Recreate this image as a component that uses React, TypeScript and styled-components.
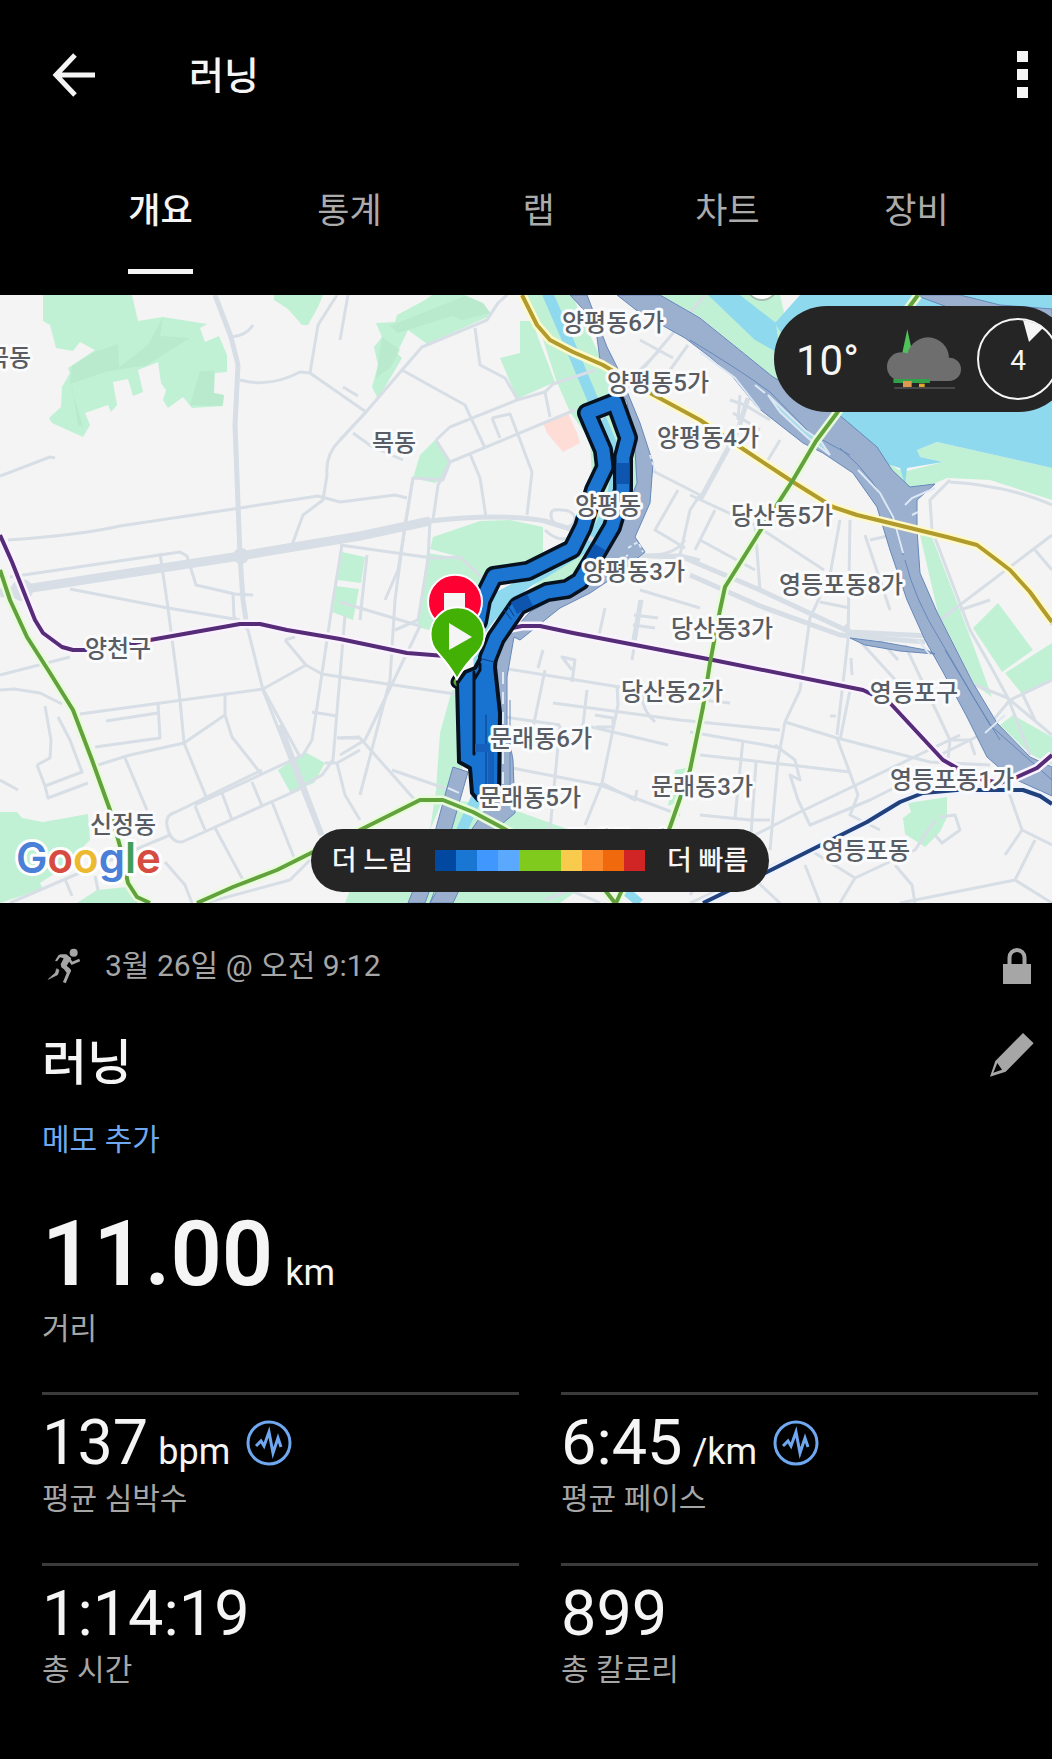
import React, { FC } from 'react'
import styled, { createGlobalStyle } from 'styled-components'

const Colors = {
    Black: '#000000',
    White: '#F5F5F5',
    Muted: '#A6A6A6',
    Link: '#6FA8F0',
    Line: '#3B3B3B',
    Panel: '#252525',
    Land: '#F4F4F4',
    Road: '#D7DEE5',
    Park: '#C1F1D4',
    ParkShade: '#B5E6C9',
    Water: '#8FD9EF',
    Highway: '#9BB0CF',
    HighwayEdge: '#6688BA',
}

type StatData = {
    value: string
    unit?: string
    label: string
    chart?: boolean
}
type MapLabel = {
    text: string
    x: number
    y: number
}

const tabs = ['개요', '통계', '랩', '차트', '장비']

const stats: StatData[] = [
    { value: '137', unit: 'bpm', label: '평균 심박수', chart: true },
    { value: '6:45', unit: '/km', label: '평균 페이스', chart: true },
    { value: '1:14:19', label: '총 시간' },
    { value: '899', label: '총 칼로리' },
]

const paceScale = ['#0048A0', '#1976D2', '#4098FF', '#5AA9FF', '#80CA1E', '#80CA1E', '#F9CB4D', '#FB8B2D', '#F0690C', '#D12424']

const labels: MapLabel[] = [
    { text: '곡동', x: 9, y: 366 },
    { text: '목동', x: 394, y: 451 },
    { text: '양평동6가', x: 613, y: 331 },
    { text: '양평동5가', x: 658, y: 391 },
    { text: '양평동4가', x: 708, y: 446 },
    { text: '양평동', x: 608, y: 514 },
    { text: '양평동3가', x: 634, y: 580 },
    { text: '당산동5가', x: 782, y: 524 },
    { text: '영등포동8가', x: 841, y: 593 },
    { text: '양천구', x: 118, y: 657 },
    { text: '당산동3가', x: 722, y: 637 },
    { text: '당산동2가', x: 672, y: 700 },
    { text: '영등포구', x: 914, y: 701 },
    { text: '문래동6가', x: 541, y: 747 },
    { text: '문래동5가', x: 530, y: 806 },
    { text: '문래동3가', x: 702, y: 795 },
    { text: '문래동4가', x: 617, y: 849 },
    { text: '영등포동1가', x: 952, y: 788 },
    { text: '영등포동', x: 866, y: 859 },
    { text: '신정동', x: 123, y: 833 },
]

const parks = [
    '43,295 43,321 50,325 56,348 73,351 80,342 95,350 68,368 70,373 62,387 61,407 49,418 52,423 83,437 90,425 85,413 108,405 111,412 117,405 113,382 128,379 133,396 143,392 138,370 158,362 161,383 166,390 163,400 168,408 183,397 192,408 223,406 224,395 214,393 215,373 227,372 227,355 219,336 205,342 200,328 207,324 163,317 138,321 132,295',
    '274,295 323,295 318,307 308,325 302,325 288,309 274,300',
    '376,323 395,322 397,315 425,300 432,295 465,295 483,303 492,315 427,344 408,330 397,353 402,358 378,399 372,387 378,365 374,347 382,337',
    '520,321 532,321 555,382 517,399 500,358 520,353',
    '527,295 572,295 606,370 640,440 640,490 610,550 560,600 520,600 560,560 592,480 590,440 570,412 556,380 540,330',
    '433,537 480,521 510,520 543,527 543,558 487,572 477,585 460,557 430,549',
    '427,553 460,558 482,580 470,640 417,627',
    '435,440 450,462 443,478 435,483 413,478 420,455',
    '342,552 365,557 361,583 337,580',
    '336,586 359,589 353,620 332,612',
    '660,295 780,295 800,380 867,453 837,413 773,377 700,317',
    '830,405 845,410 860,432 867,453 840,420',
    '875,445 887,463 903,472 943,462 920,457 917,450 937,442 1052,468 1052,500 990,480 947,478 920,490 895,487',
    '920,535 932,537 960,610 975,650 992,697 975,685 938,613',
    '973,628 998,603 1033,650 1002,672',
    '1005,673 1052,643 1052,680 1023,695',
    '1000,725 1013,715 1052,737 1052,765 1030,754',
    '908,803 947,797 947,817 940,832 925,847 905,834 903,818 911,812',
    '0,812 17,812 22,818 43,822 88,814 90,840 60,870 40,883 43,889 12,899 0,903',
    '77,903 97,890 127,887 138,903',
    '278,770 305,752 325,763 314,783 290,792',
    '452,690 462,690 462,770 447,790 430,830 436,790 440,733',
    '450,800 500,805 570,830 620,840 620,860 560,903 345,903 350,890 440,850',
    '675,770 686,768 683,800 668,806',
]

const shades = [
    '95,352 118,344 119,368 160,342 188,338 140,366 105,372 70,384 72,366',
    '163,317 148,345 118,368 145,366 190,338 160,336',
    '200,371 214,371 214,393 224,395 222,406 190,405',
    '70,373 78,425 83,427 72,390',
    '465,296 483,303 490,313 462,320 452,316 398,333 390,326',
    '382,337 400,350 390,368 376,378',
]

const highways = [
    '617,295 660,295 700,318 773,377 837,413 877,447 892,470 910,487 935,484 917,500 917,530 920,573 937,612 973,683 997,723 1030,757 1052,767 1052,796 1010,777 987,757 967,717 943,672 925,640 907,600 890,550 877,507 853,473 823,453 803,443 757,407 733,377 710,357 685,338 640,313',
    '570,295 587,295 607,347 617,367 640,423 653,463 650,503 635,537 645,552 620,573 590,593 560,608 520,640 514,637 507,677 507,727 513,760 515,813 483,840 453,903 430,903 470,832 492,800 490,700 495,650 530,612 590,578 622,520 637,483 635,450 627,402 600,360 595,322',
    '453,767 468,772 460,800 450,835 425,903 408,903 432,843 445,795',
    '850,638 882,642 926,650 935,654 900,651 865,645',
    '915,295 960,295 1000,305 1052,309 1052,325 1000,318 950,308',
]

const wideRoads = [
    'M0 592 L32 588 L240 556 L360 536 L430 521 Q500 513 545 521 L580 532 Q620 560 680 556 L760 590 L850 632 L930 636',
    'M215 295 L231 337 L238 365 L235 425 L240 556 L243 600 L246 620',
    'M690 575 L760 606 L840 635 L925 642',
    'M700 500 L738 430 L748 398',
    'M280 725 L322 835',
]

const roads = [
    'M215 295 L231 337 Q246 336 253 325',
    'M240 380 Q270 388 300 372 L310 373 L318 325 L337 295',
    'M310 373 L366 412 L340 440 Q325 455 327 475 L323 500 L303 515 L292 545',
    'M343 387 L358 396 M353 433 L371 446 L403 460',
    'M0 476 L50 457 L55 458',
    'M8 540 Q80 535 120 526 L240 508 L318 496 L340 502 L395 495 L407 498',
    'M10 577 L180 552 L187 556 L196 585 L235 594 L253 595',
    'M160 553 L168 608 L180 700 L184 743 L207 799',
    'M70 589 L168 608 L240 620',
    'M233 594 L234 617 L248 630 L263 690 L320 835',
    'M340 340 L348 295',
    'M340 440 L366 412 L402 370 L422 347 L487 320 L498 303 L507 295',
    'M402 370 L465 405 L485 448 M475 328 L480 365 L505 378 L518 400',
    'M436 440 L450 427 L517 400 L545 392 L553 384 L595 370',
    'M450 462 L575 410 M545 392 L550 417',
    'M492 418 L510 414 L520 440 L532 472 L527 515 M492 418 L500 438',
    'M470 454 L480 478 L486 517 M450 462 L438 485 L433 520',
    'M436 440 L450 462 L443 480 L413 478 L398 570 L385 600',
    'M413 478 L405 525 L395 600 L390 680 L360 795',
    'M430 521 L428 560 L418 620 L395 630',
    'M340 545 L432 558 L460 557 L490 585 M367 555 L362 600 L360 620',
    'M340 602 L420 626 M342 545 L333 600 L312 740 L303 755 L260 775 L195 805',
    'M345 615 L333 760 L322 775 L290 793',
    'M80 714 L263 689 L306 665 M263 689 L300 757',
    'M95 747 L160 738 L158 703 M106 721 L158 713 M0 690 L14 689 L40 693 L62 704 M0 675 L70 657',
    'M37 765 L50 758 L51 740 L45 706 M58 717 L70 740 L82 772 L45 786 L37 765 M45 786 L48 798 L88 783',
    'M98 765 L130 755 L184 743 L225 715 L225 693 M225 715 L232 737 L262 775',
    'M125 758 L147 810 M0 780 L18 790',
    'M167 825 Q165 815 176 812 L262 770 M167 825 Q170 843 182 842 L300 789',
    'M195 806 L205 830 M222 793 L232 820 M252 782 L262 806 M215 828 L243 880 M272 802 L295 860',
    'M10 903 L70 877 L170 835 M65 879 L72 896 M95 876 L98 890 M165 862 L185 885 L192 903',
    'M325 763 L337 763 L345 795 L360 820 M337 763 L360 750',
    'M285 640 L306 665 L322 674 L360 680 M285 640 L295 637 M312 712 L337 716 M337 738 L360 737',
    'M340 677 L455 694 M420 626 L365 740 L340 755 M340 738 L360 738 L415 800 M392 770 L450 790',
    'M705 295 L600 420 M640 340 L673 358 M660 350 L630 380 M688 345 L670 370',
    'M653 471 L700 495 L690 510 L680 555 M678 490 L655 530 L685 548 M650 555 Q675 555 685 540',
    'M640 590 L700 608 M642 600 L632 660 M700 560 L680 555',
    'M502 668 L700 700 L730 703 M505 717 L560 725 M553 703 L680 720 L780 730',
    'M512 768 L600 785 L680 815 M560 725 L550 830 M545 670 L530 742',
    'M587 690 L583 725 L668 745 M595 715 L613 718 L613 727 L596 727 M572 670 L562 657 L575 660 L572 682',
    'M617 685 L618 705 L602 783 L585 825 M602 783 L635 800 L637 790 M642 695 Q642 710 655 722',
    'M640 600 L633 640 M633 625 L655 628 M634 615 L658 618 M605 608 L598 640 M543 650 L538 668',
    'M690 495 L755 525 L824 570 M700 540 L755 570 M715 510 L695 550',
    'M755 525 L760 590 M733 413 L760 430 M780 440 L768 460 M840 520 L830 575 L810 618 L800 690 L785 722',
    'M850 520 L848 640 L837 735 M865 535 L890 610 M870 540 L888 536 M820 602 L850 608 M845 625 L900 685',
    'M785 722 L837 738 L930 762 L990 765 M785 722 L778 760 L770 850',
    'M690 732 L765 745 L780 748 M700 755 L790 765 L850 772 M743 740 L735 818 M756 762 L750 850',
    'M775 745 L795 760 L800 780 L790 775 L798 800 L810 825 L870 800 L930 770',
    'M837 738 L858 795 L850 815 L880 830 M700 815 L750 820 L770 820',
    'M690 868 L800 812 L960 735 M940 755 L980 735 L985 730',
    'M840 740 L850 690 M851 658 L852 675 M830 716 L836 716',
    'M905 645 L950 740 L948 760 M880 640 L898 660 M948 740 L970 740 L975 755',
    'M690 903 L850 830 L905 800 M750 875 L780 903 M805 865 L820 903',
    'M810 850 L855 878 L915 850 L935 820 M855 878 L840 903 M895 865 L912 885 L915 903',
    'M940 817 L955 815 L960 830 L942 843 L935 835',
    'M950 480 L930 500 L932 530 L970 630 L990 665 L1008 698 L1030 755 M950 482 Q1010 486 1052 505',
    'M940 620 L1052 535 M1010 570 L1052 625 M1035 550 L1052 570 M960 610 L990 600',
    'M985 730 L1010 700 L1052 680 M975 685 L1008 698 M1010 700 L1052 735 M1023 695 L1035 720',
    'M1008 790 L1022 830 L1005 855 M1022 830 L1052 845 M1035 840 L1015 880 L1052 903 M1015 880 L900 903',
    'M700 880 L690 895 M205 903 L290 880 L310 860 M545 900 L570 890 L600 903',
    'M730 400 L745 405 L770 420 M740 395 L738 420',
    'M553 510 Q575 508 575 520 Q570 532 555 525 Q548 515 553 510 M545 530 Q560 545 575 535',
]

const toRailPath = (points: string) => `M${points.split(' ').join(' L')}`

const rails = [
    { color: '#B09B2C', halo: '#FFF9C8', points: '522,295 537,325 550,340 573,352 603,365 650,393 700,420 740,447 793,482 833,507 857,515 947,537 977,545 993,557 1010,570 1030,592 1043,610 1052,622' },
    { color: '#562C78', halo: '#FAF2FF', points: '0,535 12,562 27,600 35,620 43,633 62,647 73,650 87,650 120,646 150,640 240,624 260,624 287,630 340,639 407,653 445,656' },
    { color: '#562C78', halo: '#FAF2FF', points: '503,630 522,626 540,626 573,633 713,660 863,690 890,703 903,717 943,760 957,768 975,778 1000,783 1017,777 1037,768 1052,755' },
    { color: '#61A23C', halo: '#E8FBDA', points: '0,570 10,600 27,637 50,673 73,710 92,760 110,810 121,850 128,883 137,897 150,903' },
    { color: '#61A23C', halo: '#E8FBDA', points: '197,903 233,887 277,870 313,852 360,830 420,800 443,800 473,812 503,828 560,860 605,890 615,903' },
    { color: '#61A23C', halo: '#E8FBDA', points: '918,295 907,310 837,413 816,441 793,480 762,528 725,587 720,610 710,663 703,707 690,770 670,827 650,862 622,890 616,903' },
    { color: '#20417C', halo: '#EEF3FF', points: '703,903 767,872 867,822 900,802 923,793 957,790 1023,790 1040,796 1052,804' },
]

const streamPath = 'M546 290 L572 350 L592 398 L612 445 L617 470 L610 510 L588 545 L540 575 L487 603 L477 625 L480 680 L480 790 L462 830 L440 903'
const trackPath = 'M478 622 L482 600 L494 576 L528 571 L572 549 L583 527 L594 490 L605 467 L603 450 L587 413 L615 402 L628 438 L623 457 L623 490 L612 527 L595 556 L580 581 L567 589 L547 592 L518 606 L496 638 L488 658'
const trackBlock = '457,683 459,762 470,768 472,793 478,800 499,795 500,713 495,667 496,655 482,655 475,668 465,672'

const BackIcon: FC = () => (
    <svg width="44" height="44" viewBox="0 0 44 44" fill="none" stroke={Colors.White} strokeWidth="5">
        <path d="M43 22H5M23 2L4 22l19 20" />
    </svg>
)

const DotsIcon: FC = () => (
    <svg width="11" height="48" viewBox="0 0 11 48" fill={Colors.White}>
        <path d="M0 0h11v11H0zM0 18h11v11H0zM0 36h11v11H0z" />
    </svg>
)

const RunIcon: FC = () => (
    <svg width="34" height="36" viewBox="0 0 100 108" fill="none" stroke={Colors.Muted}>
        <circle cx="79" cy="14" r="12" fill={Colors.Muted} stroke="none" />
        <path d="M41 19L57 19L72 31L58 53L69 63L70 72L62 80L50 64L42 58L40 49L49 31L38 28L29 40L23 38L34 21Z" fill={Colors.Muted} stroke="none" />
        <path d="M63 31L74 46L97 36" strokeWidth="8" />
        <path d="M47 53L66 68L61 80L51 104" strokeWidth="9" />
        <path d="M35 66L31 80L3 94L10 87L24 75L28 62Z" fill={Colors.Muted} strokeWidth="2" />
    </svg>
)

const LockIcon: FC = () => (
    <svg width="28" height="36" viewBox="0 0 28 36">
        <path d="M6.500 18V9.500a7.500 7.500 0 0 1 15 0V18" fill="none" stroke={Colors.Muted} strokeWidth="4" />
        <path d="M0 16h28v20H0z" fill={Colors.Muted} />
    </svg>
)

const PencilIcon: FC = () => (
    <svg width="44" height="44" viewBox="0 0 132 132" fill={Colors.Muted}>
        <path d="M99 0L131 31L47 116L0 131L16 84ZM22 90L10 119L36 110Z" fillRule="evenodd" />
    </svg>
)

const PulseIcon: FC = () => (
    <svg width="46" height="46" viewBox="0 0 46 46" fill="none" stroke={Colors.Link}>
        <circle cx="23" cy="23" r="21" strokeWidth="3" />
        <path d="M10 26L15 21L18 26L23 12L27 33L32 18L35 27" strokeWidth="3" />
    </svg>
)

const CloudIcon: FC = () => (
    <svg width="74" height="62" viewBox="0 0 222 186">
        <path d="M61 4L78 84H44Z" fill="#4FC35A" />
        <path d="M20 148H128V165H20Z" fill="#32A24A" />
        <g fill="#6E6E6E">
            <circle cx="43" cy="116" r="43" />
            <circle cx="123" cy="91" r="63" />
            <circle cx="187" cy="124" r="35" />
            <path d="M43 100H187V159H43Z" />
        </g>
        <path d="M20 153H128V165H20Z" fill="#32A24A" />
        <path d="M48 159H74V177H48Z" fill="#DD994D" />
        <path d="M96 167H113V177H96Z" fill="#E0A52F" />
        <path d="M22 180H204" stroke="#555" strokeWidth="5" />
    </svg>
)

const WindArrow: FC = () => (
    <svg width="21" height="22" viewBox="0 0 21 22">
        <path d="M0 0Q12 2 20 8L6 22Z" fill={Colors.White} />
    </svg>
)

const MapCanvas: FC<{ className?: string }> = ({ className }) => (
    <svg className={className} viewBox="0 295 1052 608" preserveAspectRatio="xMidYMid slice" role="img" aria-label="지도">
        <rect x="0" y="295" width="1052" height="608" fill={Colors.Land} />
        <g fill={Colors.Park}>{ parks.map((points) => <polygon key={points} points={points} />) }</g>
        <g fill={Colors.ParkShade} opacity="0.6">{ shades.map((points) => <polygon key={points} points={points} />) }</g>
        <polygon points="543,423 568,413 577,433 580,443 563,452 547,433" fill="#FFDDD7" />

        {/* Han river and the stream that runs into it */}
        <g fill={Colors.Water}>
            <polygon points="708,295 740,295 776,323 780,354 755,340" />
            <polygon points="800,295 1052,295 1052,468 937,442 917,450 920,457 943,462 907,468 905,485 900,468 880,462 865,450 855,430 800,375 785,340 775,323" />
            <polygon points="490,603 515,582 545,575 520,595 495,620 480,640 472,630" />
        </g>
        <path d={streamPath} fill="none" stroke={Colors.Water} strokeWidth="11" />
        <path d="M500 830L530 840L600 870L640 903" fill="none" stroke={Colors.Water} strokeWidth="9" />

        <g fill="none" stroke={Colors.Road} strokeLinejoin="round">
            <g strokeWidth="3">{ roads.map((d) => <path key={d} d={d} />) }</g>
            <g strokeWidth="5">{ wideRoads.map((d) => <path key={d} d={d} />) }</g>
            <path d="M0 593L32 588L240 556L360 536L430 521" strokeWidth="9" />
        </g>
        <circle cx="241" cy="556" r="8" fill={Colors.Road} />
        <circle cx="22" cy="590" r="11" fill={Colors.Road} />

        <g fill={Colors.Highway} stroke={Colors.HighwayEdge}>{ highways.map((points) => <polygon key={points} points={points} />) }</g>
        <g fill="none" stroke={Colors.HighwayEdge}>
            <path d="M690 340Q740 370 770 392L810 433L850 455" />
            <path d="M840 448Q878 480 893 520L903 555" />
            <path d="M905 560Q915 600 940 640L990 725L1052 780M945 650L975 700L1000 740" />
            <path d="M450 850L430 903M510 700V800" />
        </g>
        <g fill="none" stroke="#DDE8F5" strokeWidth="2">
            <path d="M768 395L805 430L820 440L830 455L808 438L780 412Z" fill="#A8DCE8" />
            <path d="M858 470L880 493L893 517L903 553" />
            <path d="M905 505L912 498L935 488M912 515L918 512M700 352L735 378L760 410M755 385L765 393" />
            <path d="M650 455L655 470M628 548L638 542L643 552M620 560L628 555" strokeDasharray="4 3" />
            <path d="M448 788L466 796M503 672V800" strokeDasharray="12 8" />
            <path d="M985 733L1005 715M918 640L930 655" />
        </g>

        <g fill="none" strokeLinejoin="round">
            { rails.map(({ halo, points }) => <path key={points} d={toRailPath(points)} stroke={halo} strokeWidth="9" />) }
            { rails.map(({ color, points }) => <path key={points} d={toRailPath(points)} stroke={color} strokeWidth="4" />) }
        </g>

        {/* recorded track */}
        <g fill="none" strokeLinejoin="round" strokeLinecap="round">
            <path d={trackPath} stroke="#06121F" strokeWidth="20" />
            <polygon points={trackBlock} fill="#1873D0" stroke="#06121F" strokeWidth="4" />
            <path d={trackPath} stroke="#1B75D1" strokeWidth="13" />
            <path d="M623 463V484M530 600L514 608M600 547L593 559" stroke="#0D55AE" strokeWidth="13" strokeLinecap="butt" />
            <path d="M474 672V754M474 680L480 670V664" stroke="#06121F" strokeWidth="3" />
            <path d="M486 715V795M508 606L514 616M504 610L511 619M482 659L494 662" stroke="#0B3F86" />
            <path d="M475 744H494V793H488V752H475Z" fill="#1460BC" stroke="none" />
            <path d="M455 676Q448 684 457 688" fill="#68A52E" stroke="#06121F" strokeWidth="3" />
        </g>

        <g fill={Colors.White} stroke="#FFFFFF" strokeWidth="2">
            <path d="M455 644L435 620A27 27 0 1 1 475 620Z" fill="#FF0033" />
            <path d="M444 593H465V614H444Z" stroke="none" />
            <path d="M457 679Q449 665 438 653A27 27 0 1 1 477 653Q465 665 457 679Z" fill="#43B005" />
            <path d="M449 623L472 637L449 650Z" stroke="none" />
        </g>

        <g>{ labels.map(({ text, x, y }) => <PlaceName key={text} x={x} y={y}>{text}</PlaceName>) }</g>
        <circle cx="762" cy="285" r="16" fill="#8C8C8C" opacity="0.5" />
        <circle cx="762" cy="284" r="15" fill="#FFFFFF" />

        <LogoText x="16" y="873">
            <tspan fill="#4A80D8">G</tspan>
            <tspan fill="#D64C40">o</tspan>
            <tspan fill="#EDB92E">o</tspan>
            <tspan fill="#4A80D8">g</tspan>
            <tspan fill="#3FA05A">l</tspan>
            <tspan fill="#D64C40">e</tspan>
        </LogoText>
    </svg>
)

const Stat: FC<{ data: StatData }> = ({ data }) => (
    <StatBox>
        <StatValue>
            <dd>{data.value}</dd>
            { data.unit && <Unit>{data.unit}</Unit> }
            { data.chart && <PulseButton type="button" aria-label={`${data.label} 차트`}><PulseIcon /></PulseButton> }
        </StatValue>
        <StatLabel>{data.label}</StatLabel>
    </StatBox>
)

const App: FC = () => (
    <Page>
        <GlobalStyle />
        <Header>
            <IconButton type="button" aria-label="뒤로"><BackIcon /></IconButton>
            <HeaderTitle>러닝</HeaderTitle>
            <IconButton type="button" aria-label="더보기"><DotsIcon /></IconButton>
        </Header>
        <TabBar role="tablist">
            { tabs.map((name, index) =>
                <Tab key={name} type="button" role="tab" aria-selected={index === 0} $selected={index === 0}>
                    <span>{name}</span>
                </Tab>
            )}
        </TabBar>
        <MapPanel>
            <StyledMapCanvas />
            <Weather>
                <Temperature>10°</Temperature>
                <CloudIcon />
                <Wind><WindArrow />4</Wind>
            </Weather>
            <LegendRow>
                <Legend>
                    <span>더 느림</span>
                    <Scale>{ paceScale.map((color, index) => <Swatch key={index} $color={color} />) }</Scale>
                    <span>더 빠름</span>
                </Legend>
            </LegendRow>
        </MapPanel>
        <Details>
            <MetaRow>
                <RunIcon />
                <time>3월 26일 @ 오전 9:12</time>
                <LockIcon />
            </MetaRow>
            <TitleRow>
                <h2>러닝</h2>
                <IconButton type="button" aria-label="이름 편집"><PencilIcon /></IconButton>
            </TitleRow>
            <NoteLink href="#note">메모 추가</NoteLink>
            <Distance>
                <DistanceValue><dd>11.00</dd><Unit>km</Unit></DistanceValue>
                <StatLabel>거리</StatLabel>
            </Distance>
            <StatGrid>{ stats.map((data) => <Stat key={data.label} data={data} />) }</StatGrid>
        </Details>
    </Page>
)

const GlobalStyle = createGlobalStyle`
    body {
        margin: 0;
        background: ${Colors.Black};
    }
    * {
        box-sizing: border-box;
    }
    button {
        padding: 0;
        border: 0;
        background: none;
        color: inherit;
        font: inherit;
        cursor: pointer;
    }
    svg {
        display: block;
        flex-shrink: 0;
    }
    h1, h2, dl, dd {
        margin: 0;
    }
`

const Page = styled.main`
    min-height: 100vh;
    background: ${Colors.Black};
    color: ${Colors.White};
    font-family: Roboto, 'Noto Sans CJK KR', sans-serif;
    font-size: 30px;
    line-height: 40px;
`

const Header = styled.header`
    display: flex;
    align-items: center;
    height: 150px;
    padding: 0 24px 0 52px;
`

const IconButton = styled.button`
    display: flex;
`

const HeaderTitle = styled.h1`
    flex: 1;
    padding: 2px 0 0 93px;
    font-size: 38px;
    font-weight: 500;
`

const TabBar = styled.div`
    display: grid;
    grid-template-columns: repeat(5, 1fr);
    padding: 0 41px 21px 66px;
`

const Tab = styled.button<{ $selected: boolean }>`
    color: ${props => props.$selected ? Colors.White : '#ABABAB'};
    font-size: 35px;
    font-weight: ${props => props.$selected ? 500 : 400};
    line-height: 124px;

    span {
        display: inline-block;
        box-shadow: ${props => props.$selected ? `inset 0 -5px ${Colors.White}` : 'none'};
    }
`

const MapPanel = styled.section`
    position: relative;
    overflow: hidden;
    height: 608px;
`

const StyledMapCanvas = styled(MapCanvas)`
    width: 100%;
    height: 100%;
`

const PlaceName = styled.text`
    fill: #595D63;
    stroke: #FAFBFC;
    stroke-width: 6px;
    stroke-linejoin: round;
    paint-order: stroke;
    text-anchor: middle;
    font-size: 24px;
    font-weight: 500;
`

const LogoText = styled.text`
    stroke: #FFFFFF;
    stroke-width: 6px;
    stroke-linejoin: round;
    paint-order: stroke;
    font-family: Inter, sans-serif;
    font-size: 42px;
    font-weight: 600;
`

const Weather = styled.div`
    position: absolute;
    top: 11px;
    right: -20px;
    display: flex;
    align-items: center;
    gap: 16px;
    width: 298px;
    height: 106px;
    padding: 0 13px 0 22px;
    border-radius: 53px;
    background: ${Colors.Panel};
`

const Temperature = styled.span`
    flex: 1;
    padding-top: 4px;
    font-size: 42px;
`

const Wind = styled.span`
    position: relative;
    width: 82px;
    height: 82px;
    border: 2px solid ${Colors.White};
    border-radius: 50%;
    font-size: 28px;
    line-height: 82px;
    text-align: center;

    svg {
        position: absolute;
        top: 0;
        right: 13px;
    }
`

const LegendRow = styled.div`
    position: absolute;
    right: 0;
    bottom: 11px;
    left: 28px;
    display: flex;
    justify-content: center;
`

const Legend = styled.div`
    display: flex;
    align-items: center;
    gap: 22px;
    height: 63px;
    padding: 0 21px;
    border-radius: 32px;
    background: ${Colors.Panel};
    font-size: 27px;
    font-weight: 500;
`

const Scale = styled.div`
    display: flex;
`

const Swatch = styled.i<{ $color: string }>`
    width: 21px;
    height: 21px;
    background: ${props => props.$color};
`

const Details = styled.section`
    padding: 0 14px 0 42px;
`

const MetaRow = styled.div`
    display: flex;
    align-items: center;
    height: 126px;
    padding: 0 7px 0 5px;
    color: ${Colors.Muted};

    time {
        flex: 1;
        padding-left: 24px;
    }
`

const TitleRow = styled.div`
    display: flex;
    justify-content: space-between;
    height: 69px;
    padding: 0 4px 0 0;

    h2 {
        font-size: 49px;
        font-weight: 500;
        line-height: 70px;
    }
    button {
        align-self: flex-start;
        padding-top: 4px;
    }
`

const NoteLink = styled.a`
    display: inline-block;
    color: ${Colors.Link};
    line-height: 84px;
    text-decoration: none;
`

const Distance = styled.dl`
    display: flex;
    flex-direction: column;
    gap: 4px;
    padding: 23px 0 43px;
`

const DistanceValue = styled.div`
    display: flex;
    align-items: baseline;
    gap: 12px;
    font-size: 90px;
    font-weight: 600;
    line-height: 100px;
`

const Unit = styled.span`
    font-size: 36px;
    font-weight: 400;
    line-height: 40px;
`

const StatGrid = styled.dl`
    display: grid;
    grid-template-columns: 1fr 1fr;
    column-gap: 42px;
`

const StatBox = styled.div`
    height: 171px;
    padding-top: 12px;
    border-top: 3px solid ${Colors.Line};
`

const StatValue = styled.div`
    display: flex;
    align-items: baseline;
    gap: 10px;
    font-size: 63px;
    line-height: 72px;
`

const StatLabel = styled.dt`
    color: ${Colors.Muted};
`

const PulseButton = styled.button`
    align-self: center;
    margin-left: 6px;
`

export default App
